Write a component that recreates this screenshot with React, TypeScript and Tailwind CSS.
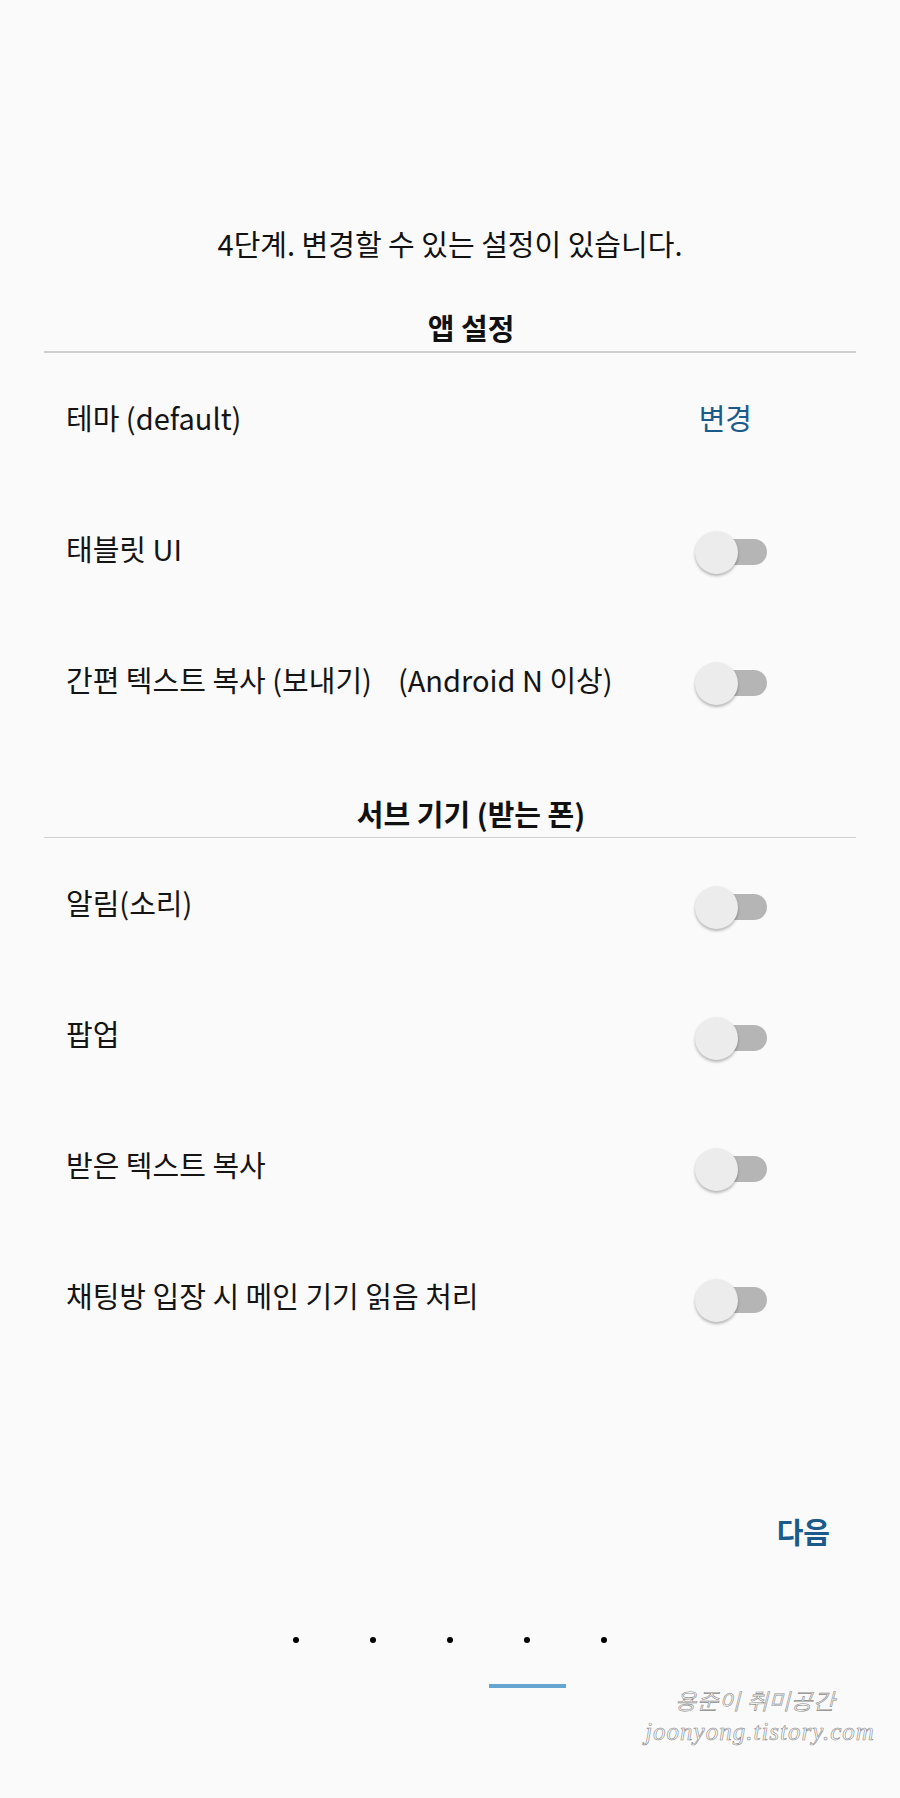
import React from "react";

type Row = { label: string; action?: "change" | "toggle" };

const appRows: Row[] = [
  { label: "테마 (default)", action: "change" },
  { label: "태블릿 UI", action: "toggle" },
  { label: "간편 텍스트 복사 (보내기)    (Android N 이상)", action: "toggle" },
];

const subRows: Row[] = [
  { label: "알림(소리)", action: "toggle" },
  { label: "팝업", action: "toggle" },
  { label: "받은 텍스트 복사", action: "toggle" },
  { label: "채팅방 입장 시 메인 기기 읽음 처리", action: "toggle" },
];

const font = "font-['Noto_Sans_CJK_KR','Noto_Sans',sans-serif]";

function Toggle() {
  return (
    <div className="relative w-[72px] h-[46px] flex items-center">
      {/* track */}
      <div className="absolute right-0 top-[10px] w-[58px] h-[26px] rounded-full bg-[#b5b5b5]" />
      {/* thumb */}
      <div className="absolute left-0 top-[2px] w-[43px] h-[43px] rounded-full bg-[#ececec] shadow-[0_2px_3px_rgba(0,0,0,0.28)]" />
    </div>
  );
}

function SettingRow({ row }: { row: Row }) {
  return (
    <div className="h-[131px] flex items-center justify-between pl-[66px] pr-[133px]">
      <span className="mb-[7px] text-[29px] text-[#141414] whitespace-pre">
        {row.label}
      </span>
      {row.action === "change" ? (
        <span className="mb-[7px] text-[29px] text-[#1b5b8c] mr-[15px]">변경</span>
      ) : (
        <Toggle />
      )}
    </div>
  );
}

function SectionHeader({ title }: { title: string }) {
  return (
    <div>
      <div className="h-[40px] leading-[40px] text-center pl-[42px] text-[29px] font-bold text-[#111]">
        {title}
      </div>
      <div className="mt-[4px] mx-[44px] h-[1.5px] bg-[#cfcfcf]" />
    </div>
  );
}

export default function App() {
  return (
    <div className={`${font} relative w-[900px] h-[1798px] bg-[#fafafa] overflow-hidden`}>
      <div className="pt-[213px] flex flex-col">
        <div className="h-[60px] leading-[60px] text-center text-[29px] text-[#111]">
          4단계. 변경할 수 있는 설정이 있습니다.
        </div>

        <div className="mt-[34px]">
          <SectionHeader title="앱 설정" />
        </div>
        <div className="pt-[3px]">
          {appRows.map((r) => (
            <SettingRow key={r.label} row={r} />
          ))}
        </div>

        <div className="mt-[44px]">
          <SectionHeader title="서브 기기 (받는 폰)" />
        </div>
        <div className="pt-[3px]">
          {subRows.map((r) => (
            <SettingRow key={r.label} row={r} />
          ))}
        </div>

        <div className="mt-[146px] h-[40px] flex justify-end pr-[70px]">
          <span className="leading-[40px] text-[29px] font-bold text-[#1b5b8c]">다음</span>
        </div>

        <div className="mt-[79px] flex justify-center">
          <div className="grid grid-cols-5 w-[385px]">
            {[0, 1, 2, 3, 4].map((i) => (
              <div key={i} className="h-[20px] flex items-center justify-center">
                <div className="w-[6px] h-[6px] rounded-full bg-black" />
              </div>
            ))}
          </div>
        </div>

        <div className="mt-[34px] flex justify-center">
          <div className="grid grid-cols-5 w-[385px]">
            <div />
            <div />
            <div />
            <div className="h-[4px] bg-[#66a5d2]" />
            <div />
          </div>
        </div>
      </div>

      {/* watermark */}
      <div className="absolute left-[630px] top-[1686px] w-[260px] flex flex-col items-center italic text-[#fafafa] font-['DejaVu_Sans',sans-serif] [-webkit-text-stroke:0.6px_#8a8a8a]">
        <span className="text-[22px] leading-[30px] mr-[10px]">용준이 취미공간</span>
        <span className="text-[25px] leading-[32px] tracking-[1px] font-['Liberation_Serif',serif]">joonyong.tistory.com</span>
      </div>
    </div>
  );
}
